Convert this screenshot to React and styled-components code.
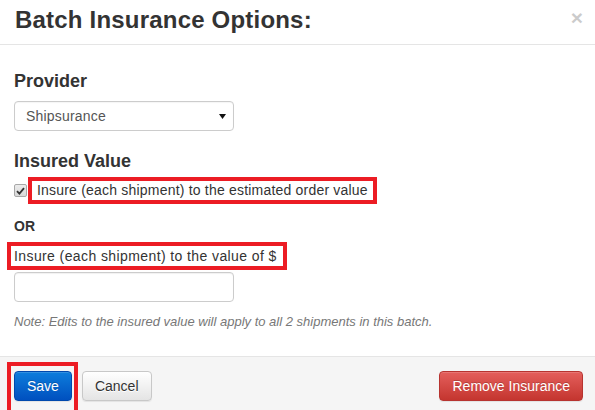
import React from "react";
import styled, { createGlobalStyle } from "styled-components";

const Global = createGlobalStyle`
  html, body { margin: 0; padding: 0; background: #fff; }
  body { font-family: "Liberation Sans", Arial, sans-serif; color: #333; font-size: 14px; }
  * { box-sizing: border-box; }
`;

const Modal = styled.div`
  width: 595px;
  height: 410px;
  overflow: hidden;
  display: flex;
  flex-direction: column;
  background: #fff;
`;

const Header = styled.div`
  display: flex;
  justify-content: space-between;
  align-items: flex-start;
  padding: 7px 12px 11px 15px;
  border-bottom: 1px solid #e5e5e5;
`;

const Title = styled.h3`
  margin: 0;
  font-size: 24px;
  line-height: 26px;
  letter-spacing: 0.2px;
  font-weight: bold;
  color: #333;
`;

const Close = styled.button`
  background: none;
  border: 0;
  padding: 0;
  margin: 0;
  font-family: "Liberation Sans", Arial, sans-serif;
  font-size: 21px;
  line-height: 1;
  font-weight: bold;
  color: #000;
  opacity: 0.2;
  cursor: pointer;
`;

const Body = styled.div`
  padding: 26px 14px 0 14px;
  flex: 1;
  display: flex;
  flex-direction: column;
  align-items: flex-start;
`;

const SectionTitle = styled.h4`
  margin: ${(p) => p.$mt || 0}px 0 0 0;
  font-size: 18px;
  line-height: 20px;
  font-weight: bold;
  color: #333;
`;

const SelectBox = styled.div`
  margin-top: 10px;
  width: 220px;
  height: 30px;
  border: 1px solid #ccc;
  border-radius: 4px;
  padding: 0 7px 0 11px;
  display: flex;
  align-items: center;
  justify-content: space-between;
  color: #555;
  font-size: 14px;
  letter-spacing: 0.2px;
  background: #fff;
  box-shadow: inset 0 1px 1px rgba(0, 0, 0, 0.04);
`;

const CheckRow = styled.div`
  margin-top: 6px;
  display: flex;
  align-items: center;
  gap: 1px;
`;

const CheckBox = styled.span`
  width: 13px;
  height: 13px;
  border: 1px solid #a8a8a8;
  border-radius: 2px;
  background: linear-gradient(#ececec, #d8d8d8);
  display: flex;
  align-items: center;
  justify-content: center;
`;

const Marked = styled.label`
  display: inline-block;
  border: 4px solid #ec1c24;
  padding: ${(p) => p.$pad};
  margin-left: ${(p) => p.$ml || 0}px;
  margin-top: ${(p) => p.$mt || 0}px;
  font-size: 14px;
  letter-spacing: ${(p) => p.$ls}px;
  line-height: ${(p) => p.$lh}px;
  color: #333;
  white-space: nowrap;
`;

const OrLabel = styled.div`
  margin-top: 12px;
  font-size: 14px;
  line-height: 20px;
  font-weight: bold;
  color: #333;
`;

const TextInput = styled.input`
  margin-top: 2px;
  width: 220px;
  height: 30px;
  border: 1px solid #ccc;
  border-radius: 4px;
  padding: 0 10px;
  font-family: inherit;
  font-size: 14px;
  box-shadow: inset 0 1px 1px rgba(0, 0, 0, 0.06);
  outline: none;
`;

const Note = styled.p`
  margin: 11px 0 0 0;
  font-size: 13px;
  line-height: 18px;
  font-style: italic;
  color: #777;
`;

const Footer = styled.div`
  height: 54px;
  border-top: 1px solid #e5e5e5;
  background: #f5f5f5;
  padding: 14px 12px 0 14px;
  display: flex;
  align-items: flex-start;
`;

const Highlight = styled.span`
  position: relative;
  display: inline-flex;
  &::after {
    content: "";
    position: absolute;
    top: -9px;
    left: -7px;
    right: -6px;
    bottom: -20px;
    border: 4px solid #ec1c24;
    pointer-events: none;
  }
`;

const variants = {
  primary: {
    bg: "linear-gradient(#0d7ddc, #0050bf)",
    border: "#0048ad",
    color: "#fff",
    shadow: "0 -1px 0 rgba(0,0,0,0.2)",
  },
  default: {
    bg: "linear-gradient(#ffffff, #e4e4e4)",
    border: "#c8c8c8",
    color: "#333",
    shadow: "0 1px 0 #fff",
  },
  danger: {
    bg: "linear-gradient(#e45f5c, #c4352f)",
    border: "#b73430",
    color: "#fff",
    shadow: "0 -1px 0 rgba(0,0,0,0.2)",
  },
};

const Button = styled.button`
  height: 30px;
  padding: 0 12px;
  margin-left: ${(p) => p.$ml || "0"};
  font-family: "Liberation Sans", Arial, sans-serif;
  font-size: 14px;
  line-height: 28px;
  border-radius: 4px;
  border: 1px solid ${(p) => variants[p.$variant].border};
  background: ${(p) => variants[p.$variant].bg};
  color: ${(p) => variants[p.$variant].color};
  text-shadow: ${(p) => variants[p.$variant].shadow};
  box-shadow: inset 0 1px 0 rgba(255, 255, 255, 0.15), 0 1px 1px rgba(0, 0, 0, 0.075);
  cursor: pointer;
`;

export default function App() {
  return (
    <>
      <Global />
      <Modal>
        <Header>
          <Title>Batch Insurance Options:</Title>
          <Close aria-label="Close">×</Close>
        </Header>
        <Body>
          <SectionTitle>Provider</SectionTitle>
          <SelectBox>
            <span>Shipsurance</span>
            <svg width="7" height="5" viewBox="0 0 7 5">
              <path d="M0 0 H7 L3.5 5 Z" fill="#111" />
            </svg>
          </SelectBox>
          <SectionTitle $mt={20}>Insured Value</SectionTitle>
          <CheckRow>
            <CheckBox>
              <svg width="9" height="8" viewBox="0 0 9 8">
                <path d="M1 4.2 L3.4 6.6 L8 1.2" stroke="#333" strokeWidth="1.8" fill="none" />
              </svg>
            </CheckBox>
            <Marked $pad="0 5px 0 5px" $lh={19} $ls={0.2}>
              Insure (each shipment) to the estimated order value
            </Marked>
          </CheckRow>
          <OrLabel>OR</OrLabel>
          <Marked $pad="0 6px 0 3px" $lh={20} $ls={0.4} $ml={-7} $mt={6}>
            Insure (each shipment) to the value of $
          </Marked>
          <TextInput type="text" />
          <Note>Note: Edits to the insured value will apply to all 2 shipments in this batch.</Note>
        </Body>
        <Footer>
          <Highlight>
            <Button $variant="primary">Save</Button>
          </Highlight>
          <Button $variant="default" $ml="10px">Cancel</Button>
          <Button $variant="danger" $ml="auto">Remove Insurance</Button>
        </Footer>
      </Modal>
    </>
  );
}
